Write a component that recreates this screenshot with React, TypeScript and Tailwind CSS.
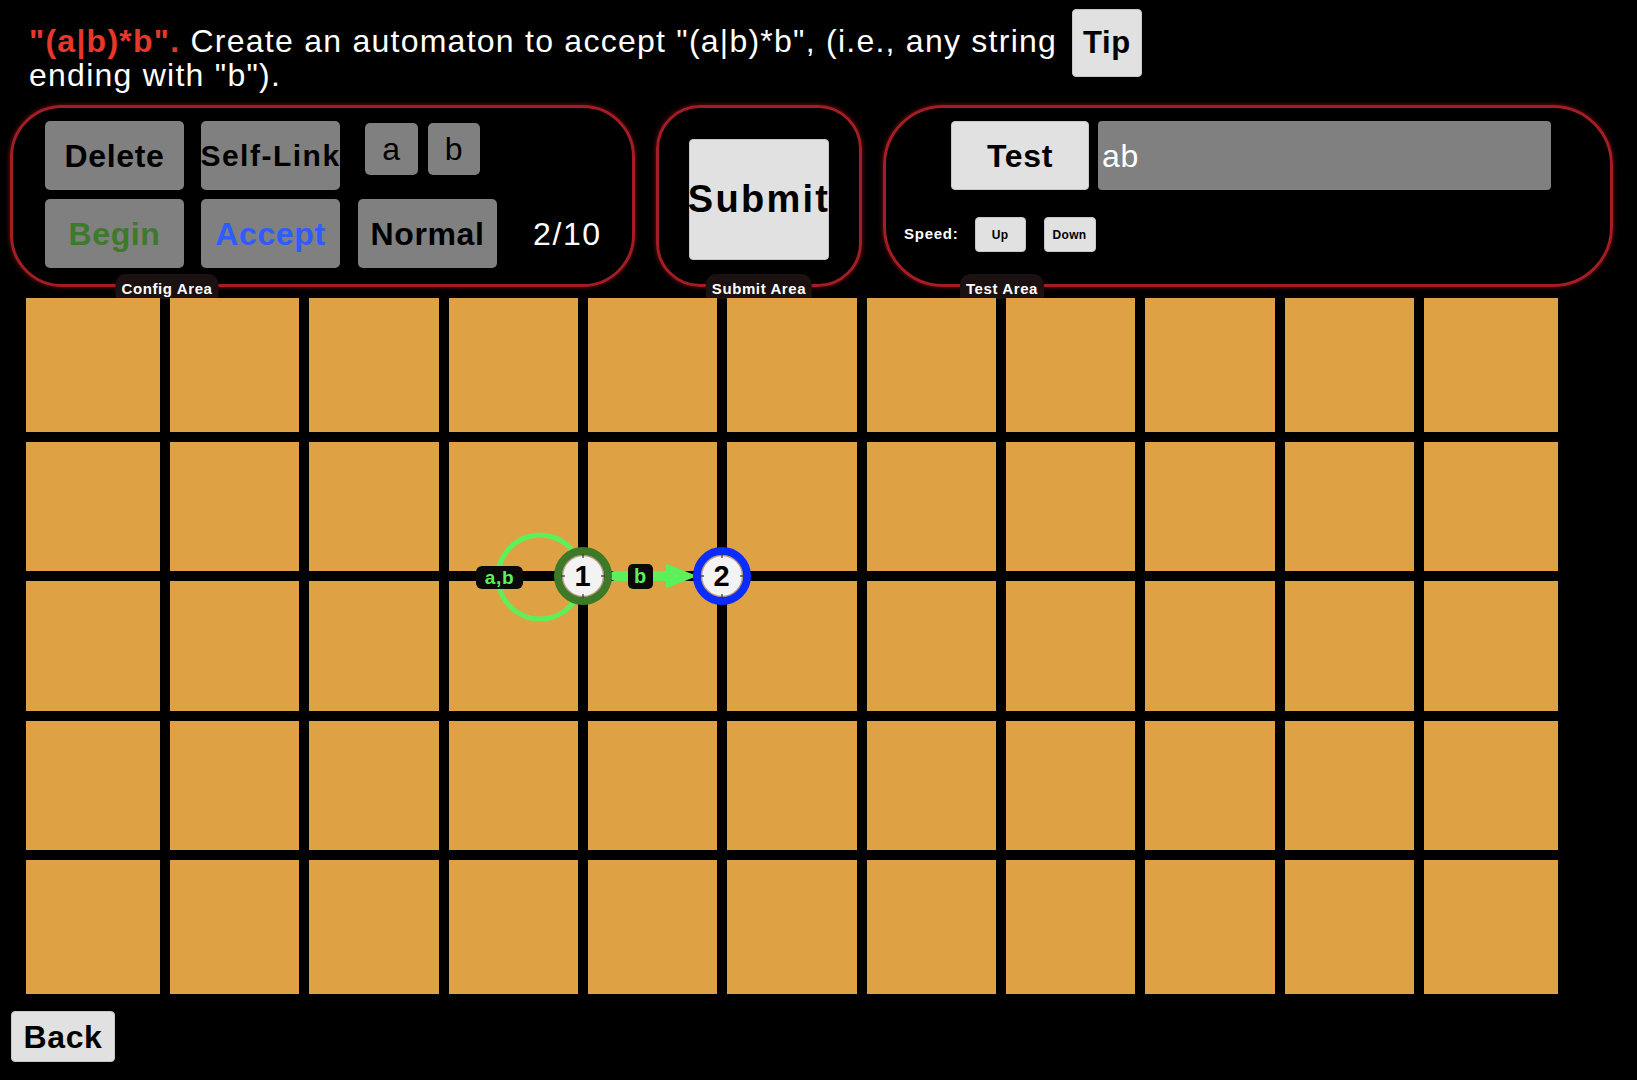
import type { ReactNode } from 'react';

const GREEN = '#5ef05a';

function GrayButton({
  children,
  className = '',
}: {
  children: ReactNode;
  className?: string;
}) {
  return (
    <button
      className={`flex items-center justify-center overflow-visible whitespace-nowrap rounded-[5px] bg-[#808080] font-bold ${className}`}
    >
      {children}
    </button>
  );
}

function LightButton({
  children,
  className = '',
}: {
  children: ReactNode;
  className?: string;
}) {
  return (
    <button
      className={`flex items-center justify-center whitespace-nowrap rounded-[4px] border border-[#c8c8c8] bg-[#e1e1e1] font-bold text-black ${className}`}
    >
      {children}
    </button>
  );
}

function AreaLabel({ text, left }: { text: string; left: string }) {
  return (
    <div
      className={`absolute bottom-[-15px] ${left} flex h-[25px] -translate-x-1/2 items-center rounded-t-[10px] bg-[#1c1111] px-[6px] pt-[3px] text-[15px] leading-none font-bold tracking-[0.04em] whitespace-nowrap text-white`}
    >
      {text}
    </div>
  );
}

function Node({ x, y, ring, label }: { x: number; y: number; ring: string; label: string }) {
  return (
    <g>
      <circle cx={x} cy={y} r={25} fill="#f3f3f3" stroke={ring} strokeWidth={8} />
      <circle cx={x} cy={y} r={20.5} fill="none" stroke="#9b7a55" strokeWidth={1.5} opacity={0.7} />
      {/* little ticks where the grid lines run under the node */}
      <line x1={x} y1={y - 22} x2={x} y2={y - 18} stroke="#333" strokeWidth={2} opacity={0.6} />
      <line x1={x} y1={y + 18} x2={x} y2={y + 22} stroke="#333" strokeWidth={2} opacity={0.6} />
      <line x1={x - 22} y1={y} x2={x - 18} y2={y} stroke="#333" strokeWidth={2} opacity={0.6} />
      <line x1={x + 18} y1={y} x2={x + 22} y2={y} stroke="#333" strokeWidth={2} opacity={0.6} />
      <text
        x={x}
        y={y + 10}
        textAnchor="middle"
        fontSize={29}
        fontWeight={700}
        fontFamily="Liberation Sans, Arial, sans-serif"
        fill="#000"
      >
        {label}
      </text>
    </g>
  );
}

function Automaton() {
  // node centres sit on grid-line crossings
  const n1 = { x: 557, y: 278 };
  const n2 = { x: 696, y: 278 };

  return (
    <svg className="pointer-events-none absolute top-0 left-0" width={1532} height={696}>
      {/* self loop on state 1 */}
      <circle cx={514} cy={279} r={42} fill="none" stroke={GREEN} strokeWidth={5} />

      {/* 1 -> 2 on b */}
      <line x1={589} y1={n1.y} x2={646} y2={n1.y} stroke={GREEN} strokeWidth={10} strokeLinecap="round" />
      <polygon points={`640,${n1.y - 12.5} 671,${n1.y} 640,${n1.y + 12.5}`} fill={GREEN} />

      <Node x={n1.x} y={n1.y} ring="#3c7a28" label="1" />
      <Node x={n2.x} y={n2.y} ring="#0b2cff" label="2" />

      {/* transition labels */}
      <rect x={450} y={268} width={47} height={23} rx={6} fill="#0a0a0a" />
      <text
        x={473.5}
        y={286}
        textAnchor="middle"
        fontSize={19}
        fontWeight={700}
        fontFamily="Liberation Sans, Arial, sans-serif"
        fill={GREEN}
      >
        a,b
      </text>
      <rect x={602} y={266} width={25} height={25} rx={5} fill="#0a0a0a" />
      <text
        x={614.5}
        y={285}
        textAnchor="middle"
        fontSize={20}
        fontWeight={700}
        fontFamily="Liberation Sans, Arial, sans-serif"
        fill={GREEN}
      >
        b
      </text>
    </svg>
  );
}

export default function App() {
  const cells = Array.from({ length: 55 }, (_, i) => i);

  return (
    <div className="min-h-[1080px] w-full bg-black font-['Liberation_Sans',Arial,Helvetica,sans-serif] tracking-[0.04em] text-white">
      {/* Task description */}
      <div className="flex h-[86px] items-start pt-[9px] pl-[29px]">
        <p className="mt-[15px] w-[1040px] text-[32px] leading-[34px] tracking-[1.25px]">
          <span className="font-bold text-[#e8372a]">"(a|b)*b".</span> Create an automaton to accept
          "(a|b)*b", (i.e., any string ending with "b").
        </p>
        <LightButton className="ml-[3px] h-[68px] w-[70px] shrink-0 text-[31px]">Tip</LightButton>
      </div>

      {/* Control panels */}
      <div className="mt-[19px] flex h-[182px] items-stretch pl-[10px]">
        {/* Config area */}
        <div className="relative w-[625px] rounded-[52px] border-[3px] border-[#a41d24] pt-[13px] pl-[32px] shadow-[0_0_5px_#7a1418]">
          <div className="flex items-start">
            <GrayButton className="h-[69px] w-[139px] text-[32px] text-black">Delete</GrayButton>
            <GrayButton className="ml-[17px] h-[69px] w-[139px] text-[30px] tracking-[0.05em] text-black">
              Self-Link
            </GrayButton>
            <GrayButton className="mt-[2px] ml-[25px] h-[52px] w-[53px] text-[32px] font-normal text-black">
              a
            </GrayButton>
            <GrayButton className="mt-[2px] ml-[10px] h-[52px] w-[52px] text-[32px] font-normal text-black">
              b
            </GrayButton>
          </div>
          <div className="mt-[9px] flex items-center">
            <GrayButton className="h-[69px] w-[139px] text-[32px] text-[#3d7a2c]">Begin</GrayButton>
            <GrayButton className="ml-[17px] h-[69px] w-[139px] text-[32px] text-[#2f5bff]">Accept</GrayButton>
            <GrayButton className="ml-[18px] h-[69px] w-[139px] text-[32px] text-black">Normal</GrayButton>
            <span className="ml-[36px] text-[32px] tracking-[0.05em]">2/10</span>
          </div>
          <AreaLabel text="Config Area" left="left-[154px]" />
        </div>

        {/* Submit area */}
        <div className="relative ml-[21px] flex w-[206px] items-center justify-center rounded-[44px] border-[3px] border-[#a41d24] pt-[6px] shadow-[0_0_5px_#7a1418]">
          <LightButton className="h-[121px] w-[140px] overflow-visible text-[38px] tracking-[0.06em]">
            Submit
          </LightButton>
          <AreaLabel text="Submit Area" left="left-[100px]" />
        </div>

        {/* Test area */}
        <div className="relative ml-[21px] w-[730px] rounded-[60px] border-[3px] border-[#a41d24] pt-[13px] shadow-[0_0_5px_#7a1418]">
          <div className="flex pl-[65px]">
            <LightButton className="h-[69px] w-[138px] text-[32px]">Test</LightButton>
            <div className="ml-[9px] flex h-[69px] w-[453px] items-center rounded-[4px] bg-[#808080] pl-[4px] text-[32px] text-white">
              ab
            </div>
          </div>
          <div className="mt-[27px] flex items-center pl-[18px]">
            <span className="text-[15px] font-bold tracking-[0.05em]">Speed:</span>
            <LightButton className="ml-[16px] h-[35px] w-[51px] text-[12px] tracking-[0.03em]">Up</LightButton>
            <LightButton className="ml-[18px] h-[35px] w-[52px] text-[12px] tracking-[0.03em]">Down</LightButton>
          </div>
          <AreaLabel text="Test Area" left="left-[116px]" />
        </div>
      </div>

      {/* Board */}
      <div className="relative mt-[11px] ml-[26px] h-[696px] w-[1532px]">
        <div className="grid h-full w-full grid-cols-[134px_repeat(9,1fr)_134px] grid-rows-[134px_repeat(3,1fr)_134px] gap-[10px]">
          {cells.map((i) => (
            <div key={i} className="bg-[#dea244]" />
          ))}
        </div>
        <Automaton />
      </div>

      <LightButton className="mt-[17px] ml-[11px] h-[51px] w-[104px] text-[32px]">Back</LightButton>
    </div>
  );
}
